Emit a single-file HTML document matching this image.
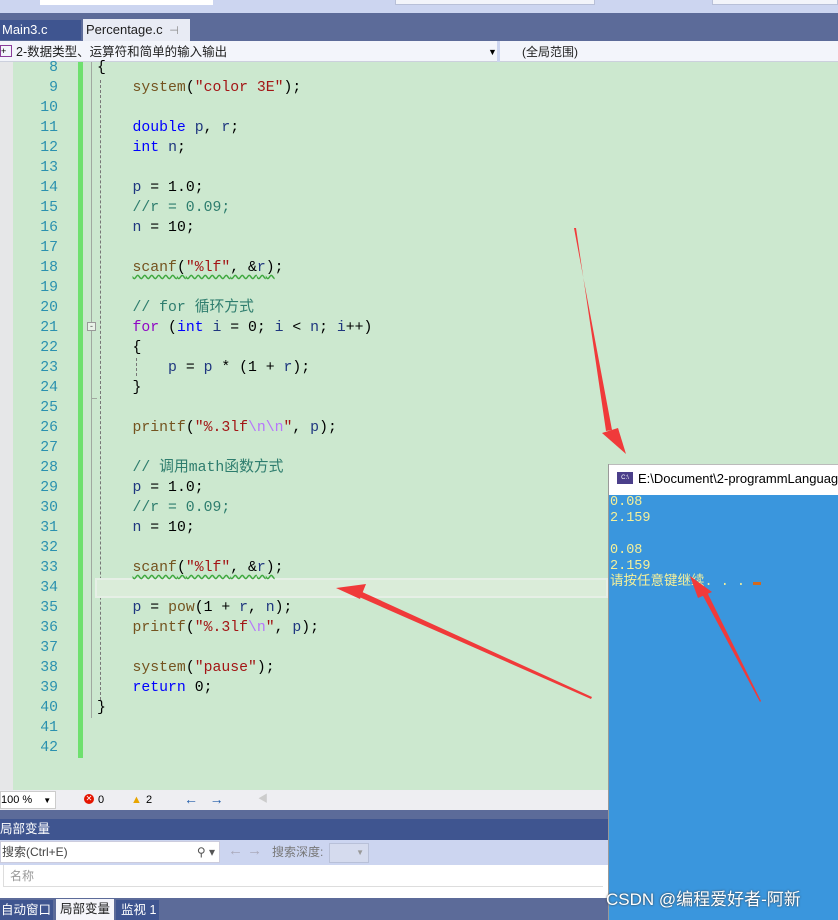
<!DOCTYPE html>
<html><head><meta charset="utf-8"><style>
*{margin:0;padding:0;box-sizing:border-box}
body{width:838px;height:920px;overflow:hidden;position:relative;background:#cce8cf;font-family:"Liberation Sans","Noto Sans CJK SC",sans-serif;font-size:12px}
.a{position:absolute}
.code{font-family:"Liberation Mono","Noto Sans CJK SC",monospace;font-size:14.8px;white-space:pre;color:#000;line-height:20px}
.ln{position:absolute;left:0;width:58px;text-align:right;color:#2b91af;font-family:"Liberation Mono",monospace;font-size:14.8px;line-height:20px}
.k{color:#0000ff}.p{color:#8f08c4}.s{color:#a31515}.c{color:#2e7d6e}.f{color:#74531f}.v{color:#1f377f}.e{color:#b776fb}
.sq{text-decoration:underline wavy #3fa83f;text-underline-offset:3px}
</style></head><body>
<!-- top -->
<div class="a" style="left:0;top:0;width:838px;height:13px;background:#ccd5f0"></div>
<div class="a" style="left:40px;top:0;width:173px;height:5px;background:#fff"></div>
<div class="a" style="left:395px;top:0;width:200px;height:5px;background:#f2f4fa;border:1px solid #b8c0d8;border-top:none"></div>
<div class="a" style="left:712px;top:0;width:126px;height:5px;background:#f2f4fa;border:1px solid #b8c0d8;border-top:none"></div>
<div class="a" style="left:0;top:13px;width:838px;height:28px;background:#5c6b99"></div>
<div class="a" style="left:0;top:20px;width:81px;height:20px;background:#3f5590;color:#fff;font-size:13px;line-height:20px;padding-left:2px">Main3.c</div>
<div class="a" style="left:83px;top:19px;width:107px;height:22px;background:#e8ebf4;color:#1e1e1e;font-size:13px;line-height:22px;padding-left:3px">Percentage.c <span style="color:#888;font-size:11px">&nbsp;⊣ ✕</span></div>
<div class="a" style="left:0;top:41px;width:838px;height:21px;background:#f3f5fb;border-bottom:1px solid #ccd0dd"></div>
<div class="a" style="left:0;top:45px;width:12px;height:12px;border:1px solid #8a3d9a;font-size:9px;line-height:10px">+</div>
<div class="a" style="left:16px;top:42px;font-size:12.5px;line-height:20px;color:#1e1e1e">2-数据类型、运算符和简单的输入输出</div>
<div class="a" style="left:488px;top:42px;font-size:9px;line-height:20px">▼</div>
<div class="a" style="left:497px;top:41px;width:3px;height:21px;background:#ccd5f0"></div>
<div class="a" style="left:522px;top:42px;font-size:12px;line-height:20px;color:#1e1e1e">(全局范围)</div>
<!-- code area -->
<div class="a" style="left:0;top:62px;width:13px;height:728px;background:#e6e7e8"></div>
<div class="a" style="left:78px;top:62px;width:5px;height:696px;background:#6ee06e"></div>
<div class="a" style="left:91px;top:62px;width:1px;height:336px;background:#a0a8a0"></div>
<div class="a" style="left:91px;top:398px;width:6px;height:1px;background:#a0a8a0"></div>
<div class="a" style="left:91px;top:398px;width:1px;height:320px;background:#a0a8a0"></div>
<div class="a" style="left:87px;top:322px;width:9px;height:9px;border:1px solid #999;background:#e8f2e8;font-size:9px;line-height:6px;text-align:center;color:#555">-</div>
<div class="a" style="left:100px;top:80px;height:620px;border-left:1px dashed #777"></div>
<div class="a" style="left:136px;top:358px;height:18px;border-left:1px dashed #777"></div>
<div class="a" style="left:95px;top:578px;width:513px;height:20px;background:#daecd9;border:2px solid #e6efe6"></div>
<div class="a" style="left:0;top:58px;width:13px;height:0"></div>
<div class="a" style="left:0;top:58px;width:600px;height:720px;overflow:visible">
<div class="ln" style="top:0">8</div><div class="ln" style="top:20px">9</div><div class="ln" style="top:40px">10</div><div class="ln" style="top:60px">11</div><div class="ln" style="top:80px">12</div><div class="ln" style="top:100px">13</div><div class="ln" style="top:120px">14</div><div class="ln" style="top:140px">15</div><div class="ln" style="top:160px">16</div><div class="ln" style="top:180px">17</div><div class="ln" style="top:200px">18</div><div class="ln" style="top:220px">19</div><div class="ln" style="top:240px">20</div><div class="ln" style="top:260px">21</div><div class="ln" style="top:280px">22</div><div class="ln" style="top:300px">23</div><div class="ln" style="top:320px">24</div><div class="ln" style="top:340px">25</div><div class="ln" style="top:360px">26</div><div class="ln" style="top:380px">27</div><div class="ln" style="top:400px">28</div><div class="ln" style="top:420px">29</div><div class="ln" style="top:440px">30</div><div class="ln" style="top:460px">31</div><div class="ln" style="top:480px">32</div><div class="ln" style="top:500px">33</div><div class="ln" style="top:520px">34</div><div class="ln" style="top:540px">35</div><div class="ln" style="top:560px">36</div><div class="ln" style="top:580px">37</div><div class="ln" style="top:600px">38</div><div class="ln" style="top:620px">39</div><div class="ln" style="top:640px">40</div><div class="ln" style="top:660px">41</div><div class="ln" style="top:680px">42</div>
<div class="a code" style="left:97px;top:0">{
    <span class="f">system</span>(<span class="s">"color 3E"</span>);

    <span class="k">double</span> <span class="v">p</span>, <span class="v">r</span>;
    <span class="k">int</span> <span class="v">n</span>;

    <span class="v">p</span> = 1.0;
    <span class="c">//r = 0.09;</span>
    <span class="v">n</span> = 10;

    <span class="sq"><span class="f">scanf</span>(<span class="s">"%lf"</span>, &amp;<span class="v">r</span>)</span>;

    <span class="c">// for 循环方式</span>
    <span class="p">for</span> (<span class="k">int</span> <span class="v">i</span> = 0; <span class="v">i</span> &lt; <span class="v">n</span>; <span class="v">i</span>++)
    {
        <span class="v">p</span> = <span class="v">p</span> * (1 + <span class="v">r</span>);
    }

    <span class="f">printf</span>(<span class="s">"%.3lf<span class="e">\n\n</span>"</span>, <span class="v">p</span>);

    <span class="c">// 调用math函数方式</span>
    <span class="v">p</span> = 1.0;
    <span class="c">//r = 0.09;</span>
    <span class="v">n</span> = 10;

    <span class="sq"><span class="f">scanf</span>(<span class="s">"%lf"</span>, &amp;<span class="v">r</span>)</span>;

    <span class="v">p</span> = <span class="f">pow</span>(1 + <span class="v">r</span>, <span class="v">n</span>);
    <span class="f">printf</span>(<span class="s">"%.3lf<span class="e">\n</span>"</span>, <span class="v">p</span>);

    <span class="f">system</span>(<span class="s">"pause"</span>);
    <span class="k">return</span> 0;
}</div>
</div>
<!-- status -->
<div class="a" style="left:0;top:790px;width:838px;height:20px;background:#eeeef2"></div>
<div class="a" style="left:0;top:791px;width:56px;height:18px;background:#fff;border:1px solid #ccc;font-size:11px;line-height:16px">100 % <span style="font-size:8px;margin-left:8px">▼</span></div>
<div class="a" style="left:84px;top:794px;width:10px;height:10px;border-radius:50%;background:#e51400;color:#fff;font-size:8px;line-height:10px;text-align:center">✕</div>
<div class="a" style="left:98px;top:792px;font-size:11px;line-height:16px">0</div>
<div class="a" style="left:131px;top:792px;color:#e8a500;font-size:11px;line-height:16px">▲</div>
<div class="a" style="left:146px;top:792px;font-size:11px;line-height:16px">2</div>
<div class="a" style="left:184px;top:790px;color:#1e5aa8;font-size:14px;line-height:18px">←&nbsp;&nbsp;&nbsp;→</div>
<div class="a" style="left:258px;top:792px;color:#ccc;font-size:10px;line-height:16px">◀</div>
<div class="a" style="left:0;top:810px;width:838px;height:9px;background:#5c6b99"></div>
<div class="a" style="left:0;top:819px;width:838px;height:21px;background:#3f5590;color:#fff;font-size:12.5px;line-height:20px">局部变量</div>
<div class="a" style="left:0;top:840px;width:838px;height:25px;background:#ccd5f0"></div>
<div class="a" style="left:0;top:841px;width:220px;height:22px;background:#fff;border:1px solid #ccd;font-size:12px;line-height:20px;color:#444;padding-left:1px">搜索(Ctrl+E)<span style="position:absolute;right:4px;color:#555">⚲ ▾</span></div>
<div class="a" style="left:228px;top:842px;color:#aab;font-size:15px;line-height:18px">← →</div>
<div class="a" style="left:272px;top:843px;color:#777;font-size:12px;line-height:18px">搜索深度:</div>
<div class="a" style="left:329px;top:843px;width:40px;height:20px;background:#d5dbee;border:1px solid #b8c0d8;color:#999;font-size:8px;line-height:18px;text-align:right;padding-right:4px">▼</div>
<div class="a" style="left:0;top:865px;width:838px;height:33px;background:#fff"></div>
<div class="a" style="left:3px;top:865px;width:600px;height:22px;border-left:1px solid #ddd;border-bottom:1px solid #ddd;color:#999;font-size:12px;line-height:22px;padding-left:6px">名称</div>
<div class="a" style="left:0;top:898px;width:838px;height:22px;background:#5c6b99"></div>
<div class="a" style="left:0;top:900px;width:53px;height:20px;background:#3f5590;color:#fff;font-size:12.5px;line-height:20px;padding-left:1px">自动窗口</div>
<div class="a" style="left:56px;top:899px;width:58px;height:21px;background:#f5f5fa;color:#1e1e1e;font-size:12.5px;line-height:21px;padding-left:4px">局部变量</div>
<div class="a" style="left:116px;top:900px;width:43px;height:20px;background:#3f5590;color:#fff;font-size:12.5px;line-height:20px;padding-left:5px">监视 1</div>
<!-- console -->
<div class="a" style="left:608px;top:464px;width:230px;height:456px;background:#3a96dd;border-left:1px solid #999"></div>
<div class="a" style="left:609px;top:464px;width:229px;height:31px;background:#fff;border-top:1px solid #bbb"></div>
<div class="a" style="left:617px;top:472px;width:16px;height:12px;background:#4b3f8a;color:#fff;font-size:6px;line-height:12px;text-align:center">C:\</div>
<div class="a" style="left:638px;top:470px;font-size:13px;line-height:18px;color:#000;white-space:nowrap">E:\Document\2-programmLanguag</div>
<div class="a" style="left:610px;top:495px;color:#f5f09a;font-family:'Liberation Mono','Noto Sans CJK SC',monospace;font-size:13.5px;line-height:16px;white-space:pre">0.08
2.159

0.08
2.159
请按任意键继续. . . <span style="display:inline-block;width:8px;height:3px;background:#d2691e"></span></div>
<div class="a" style="left:606px;top:890px;color:#fff;font-size:17px;line-height:20px;text-shadow:0 0 2px #333;white-space:nowrap">CSDN @编程爱好者-阿新</div>
<!-- arrows -->
<svg class="a" style="left:0;top:0" width="838" height="920">
<g fill="#f03a3a">
<polygon points="574,228 612,430 606,431 576,228"/>
<polygon points="626,454 602,433 618,428"/>
<polygon points="591,699 357,596 360,591 592,697"/>
<polygon points="336,588 366,584 360,599"/>
<polygon points="760,702 702,594 707,592 761,701"/>
<polygon points="690,576 712,592 698,598"/>
</g>
</svg>
</body></html>
